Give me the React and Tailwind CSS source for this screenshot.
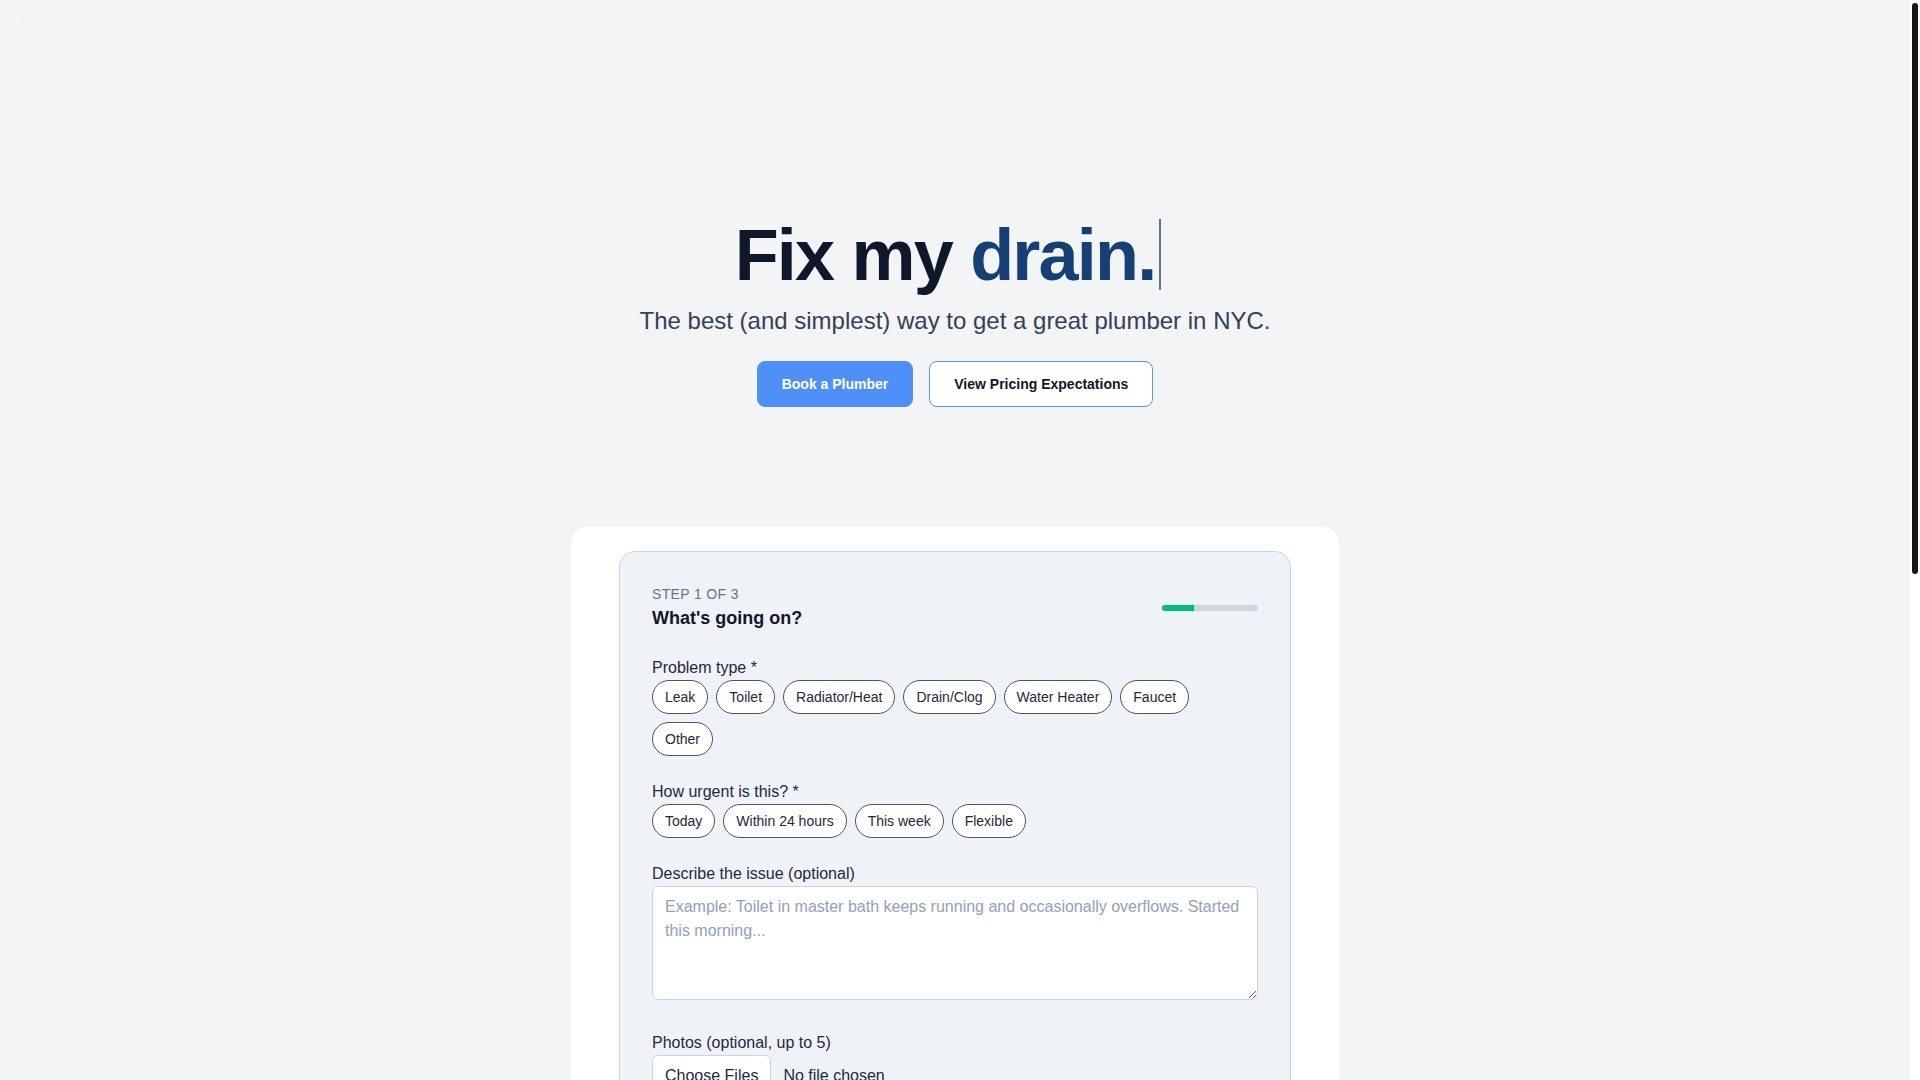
import { useState } from "react";

const problemTypes = [
  "Leak",
  "Toilet",
  "Radiator/Heat",
  "Drain/Clog",
  "Water Heater",
  "Faucet",
  "Other",
];

const urgencyOptions = ["Today", "Within 24 hours", "This week", "Flexible"];

const pricing = [
  { job: "Clogged drain or toilet", range: "$150 – $350" },
  { job: "Leaking faucet or pipe", range: "$175 – $450" },
  { job: "Radiator / heat issue", range: "$200 – $600" },
  { job: "Water heater repair", range: "$300 – $900" },
];

const steps = [
  { n: "1", title: "Tell us what's wrong", text: "A few taps and an optional photo." },
  { n: "2", title: "We match a plumber", text: "Licensed, vetted, and near you." },
  { n: "3", title: "Get it fixed", text: "Clear pricing before work starts." },
];

function Chip({ label, selected, onClick }) {
  return (
    <button
      type="button"
      onClick={onClick}
      className={
        selected
          ? "rounded-full border border-[#163f73] bg-[#163f73] px-3 py-1.5 text-sm text-white"
          : "rounded-full border border-gray-600 bg-white px-3 py-1.5 text-sm text-slate-800"
      }
    >
      {label}
    </button>
  );
}

export default function App() {
  const [problem, setProblem] = useState(null);
  const [urgency, setUrgency] = useState(null);

  return (
    <div className="flex h-screen bg-gray-100 font-['Liberation_Sans',Arial,sans-serif] text-slate-800">
      <div className="relative flex-1 overflow-y-auto [scrollbar-width:none]">
        {/* ghost header, barely visible */}
        <div className="fixed left-3.5 right-[26px] top-2.5 h-[98px] rounded-2xl border border-white/40" />

        <section className="flex flex-col items-center pb-16 pt-[219px] text-center">
          <h1 className="text-7xl leading-none font-bold tracking-tight text-slate-900">
            Fix my <span className="text-[#163f73]">drain.</span>
            <span className="ml-1 mr-3.5 inline-block h-[71px] w-0.5 bg-slate-500 align-top" />
          </h1>
          <p className="mt-3.5 text-2xl text-slate-700">
            The best (and simplest) way to get a great plumber in NYC.
          </p>
          <div className="mt-6 flex gap-4">
            <button className="rounded-lg border border-[#4f8ff8] bg-[#4f8ff8] px-6 py-3 text-sm font-bold text-white">
              Book a Plumber
            </button>
            <button className="rounded-lg border border-[#5b95f2] bg-white px-6 py-3 text-sm font-bold text-slate-900">
              View Pricing Expectations
            </button>
          </div>
        </section>

        <section className="pb-20 pt-14">
          <div className="mx-auto w-[768px] rounded-2xl bg-white px-12 pb-12 pt-6">
            <div className="rounded-2xl border border-slate-300 bg-[#eff3f8] p-8">
              <div className="flex items-center justify-between">
                <div>
                  <p className="text-sm uppercase tracking-wide text-slate-500">
                    Step 1 of 3
                  </p>
                  <h2 className="text-lg font-bold text-slate-900">
                    What's going on?
                  </h2>
                </div>
                <div className="h-1.5 w-24 overflow-hidden rounded-full bg-slate-300">
                  <div className="h-full w-1/3 bg-emerald-500" />
                </div>
              </div>

              <div className="mt-6">
                <label className="block text-base text-slate-800">
                  Problem type *
                </label>
                <div className="flex flex-wrap gap-2">
                  {problemTypes.map((p) => (
                    <Chip
                      key={p}
                      label={p}
                      selected={problem === p}
                      onClick={() => setProblem(p)}
                    />
                  ))}
                </div>
              </div>

              <div className="mt-6">
                <label className="block text-base text-slate-800">
                  How urgent is this? *
                </label>
                <div className="flex flex-wrap gap-2">
                  {urgencyOptions.map((u) => (
                    <Chip
                      key={u}
                      label={u}
                      selected={urgency === u}
                      onClick={() => setUrgency(u)}
                    />
                  ))}
                </div>
              </div>

              <div className="mt-6 text-base">
                <label className="block text-slate-800">
                  Describe the issue (optional)
                </label>
                <textarea
                  rows="4"
                  className="w-full rounded-md border border-slate-300 bg-white px-3 py-2 text-base text-slate-800 placeholder:text-slate-400"
                  placeholder="Example: Toilet in master bath keeps running and occasionally overflows. Started this morning..."
                ></textarea>
              </div>

              <div className="mt-6">
                <label className="block text-base text-slate-800">
                  Photos (optional, up to 5)
                </label>
                <input
                  type="file"
                  multiple
                  accept="image/*"
                  className="text-base text-slate-800 file:mr-3 file:rounded-md file:border file:border-solid file:border-slate-300 file:bg-white file:px-3 file:py-2 file:text-base file:text-slate-800"
                />
              </div>

              <div className="mt-8 flex justify-end">
                <button className="rounded-lg bg-[#4f8ff8] px-6 py-3 text-sm font-bold text-white">
                  Continue
                </button>
              </div>
            </div>
          </div>
        </section>

        <section className="pb-20">
          <div className="mx-auto w-[768px]">
            <h2 className="text-center text-3xl font-bold text-slate-900">
              How it works
            </h2>
            <div className="mt-8 grid grid-cols-3 gap-6">
              {steps.map((s) => (
                <div key={s.n} className="rounded-2xl bg-white p-6">
                  <div className="flex h-8 w-8 items-center justify-center rounded-full bg-[#163f73] text-sm font-bold text-white">
                    {s.n}
                  </div>
                  <p className="mt-4 font-bold text-slate-900">{s.title}</p>
                  <p className="mt-1 text-sm text-slate-600">{s.text}</p>
                </div>
              ))}
            </div>
          </div>
        </section>

        <section id="pricing" className="pb-20">
          <div className="mx-auto w-[768px] rounded-2xl bg-white p-12">
            <h2 className="text-3xl font-bold text-slate-900">
              Pricing expectations
            </h2>
            <p className="mt-2 text-base text-slate-600">
              Typical ranges for common jobs in NYC. Your plumber confirms the
              price before starting.
            </p>
            <div className="mt-8 flex flex-col gap-3">
              {pricing.map((row) => (
                <div
                  key={row.job}
                  className="flex items-center justify-between rounded-xl border border-slate-200 bg-[#eff3f8] px-5 py-4"
                >
                  <span className="text-base text-slate-800">{row.job}</span>
                  <span className="text-base font-bold text-slate-900">
                    {row.range}
                  </span>
                </div>
              ))}
            </div>
          </div>
        </section>

        <footer className="border-t border-slate-200 py-10 text-center text-sm text-slate-500">
          © Fix my drain · New York City
        </footer>
      </div>

      {/* page scrollbar */}
      <div className="w-2.5 shrink-0 bg-white pt-[3px]">
        <div className="mx-auto h-[571px] w-1.5 rounded-full bg-neutral-900" />
      </div>
    </div>
  );
}
